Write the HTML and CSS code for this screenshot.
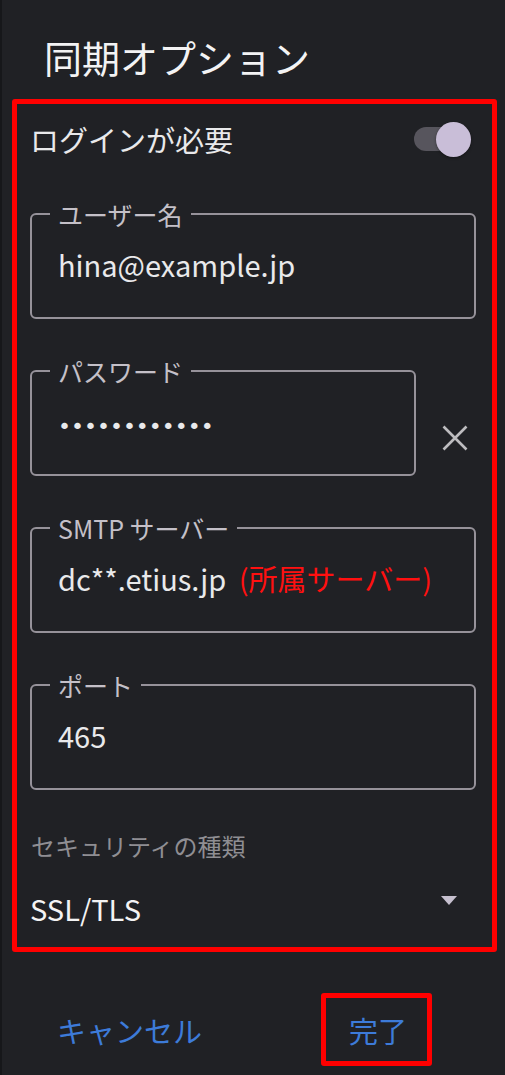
FILE: index.html
```html
<!DOCTYPE html>
<html lang="ja">
<head>
    <meta charset="UTF-8">
    <meta name="viewport" content="width=device-width, initial-scale=1.0">
    <title>同期オプション</title>
    <link rel="stylesheet" href="styles.css">
</head>
<body>
    <div class="dialog">
        <h1 class="dialog-title">同期オプション</h1>
        <div class="highlight">
            <div class="switch-row">
                <span class="switch-label">ログインが必要</span>
                <span class="switch"><span class="switch-thumb"></span></span>
            </div>

            <fieldset class="field">
                <legend>ユーザー名</legend>
                <div class="field-value">hina@example.jp</div>
            </fieldset>

            <div class="field-row">
                <fieldset class="field field-short">
                    <legend>パスワード</legend>
                    <div class="field-value"><span class="dots">••••••••••••</span></div>
                </fieldset>
                <svg class="clear-icon" width="26" height="26" viewBox="0 0 26 26">
                    <path d="M1.5 1.5 L24.5 24.5 M24.5 1.5 L1.5 24.5" stroke="currentColor" stroke-width="2.6" fill="none"/>
                </svg>
            </div>

            <fieldset class="field">
                <legend>SMTP サーバー</legend>
                <div class="field-value">dc**.etius.jp <span class="note">(所属サーバー)</span></div>
            </fieldset>

            <fieldset class="field">
                <legend>ポート</legend>
                <div class="field-value">465</div>
            </fieldset>

            <div class="select-label">セキュリティの種類</div>
            <div class="select-row">
                <span class="select-value">SSL/TLS</span>
                <svg class="select-arrow" width="16" height="9" viewBox="0 0 16 9">
                    <polygon points="0,0 16,0 8,9" fill="currentColor"/>
                </svg>
            </div>
        </div>

        <div class="actions">
            <button class="btn btn-cancel">キャンセル</button>
            <button class="btn btn-done">完了</button>
        </div>
    </div>
</body>
</html>
```

FILE: styles.css
```css
body {
    margin: 0;
    background-color: #202125;
    font-family: "Noto Sans CJK JP", "Noto Sans", sans-serif;
    color: #e9e9eb;
}
.dialog {
    height: 1075px;
    box-sizing: border-box;
    border-left: 2px solid #16171a;
    padding-top: 30px;
}
.dialog-title {
    margin: 0 0 0 42px;
    font-size: 38px;
    font-weight: 400;
    line-height: 54px;
    color: #f3f3f4;
}
.highlight {
    margin: 15px 8px 0 10px;
    border: 5px solid #ff0000;
    border-radius: 3px;
    padding-bottom: 19px;
}
.switch-row {
    height: 70px;
    display: flex;
    align-items: center;
    justify-content: space-between;
    padding: 0 26px 0 13px;
}
.switch-label {
    font-size: 29px;
    line-height: 40px;
}
.switch {
    position: relative;
    width: 52px;
    height: 24px;
    border-radius: 12px;
    background-color: #57555d;
}
.switch-thumb {
    position: absolute;
    left: 22px;
    top: -5.5px;
    width: 35px;
    height: 35px;
    border-radius: 50%;
    background-color: #c9bed8;
    box-shadow: 0 1px 3px rgba(0,0,0,0.4);
}
.field {
    margin: 39px 16px 0 13px;
    min-width: 0;
    border: 2px solid #96929a;
    border-radius: 6px;
    padding: 17px 18px 33px;
}
.switch-row + .field {
    margin-top: 27px;
}
.field legend {
    padding: 0 8px;
    font-size: 25px;
    line-height: 26px;
    color: #c4c0c8;
}
.field-value {
    height: 40px;
    padding-left: 8px;
    font-size: 29px;
    line-height: 40px;
    white-space: nowrap;
}
.note {
    margin-left: 6px;
    color: #ff1010;
}
.field-row {
    display: flex;
    align-items: flex-end;
    margin-top: 39px;
}
.field-row .field {
    margin-top: 0;
    margin-right: 0;
}
.field-short {
    width: 386px;
    box-sizing: border-box;
    flex: none;
}
.dots {
    font-family: "DejaVu Sans", sans-serif;
    font-size: 22px;
    line-height: 1;
}
.clear-icon {
    margin: 0 0 25px 26px;
    color: #bdbcbf;
}
.select-label {
    margin-top: 40px;
    padding-left: 14px;
    font-size: 24px;
    line-height: 32px;
    color: #8f8e93;
}
.select-row {
    margin-top: 26px;
    display: flex;
    align-items: center;
    justify-content: space-between;
    padding: 0 35px 0 13px;
    height: 40px;
}
.select-value {
    font-size: 29px;
    line-height: 40px;
    color: #f3f3f4;
}
.select-arrow {
    color: #c6c0cf;
    align-self: flex-start;
    margin-top: 8px;
}
.actions {
    display: flex;
    align-items: center;
    margin-top: 41px;
}
.btn {
    background: none;
    border: none;
    padding: 0;
    font-family: inherit;
    font-size: 29px;
    line-height: 40px;
    color: #3d7bd9;
}
.btn-cancel {
    margin-left: 55px;
}
.btn-done {
    margin-left: 119px;
    height: 73px;
    box-sizing: border-box;
    border: 5px solid #ff0000;
    border-radius: 3px;
    padding: 0 20px 0 23px;
}
```
